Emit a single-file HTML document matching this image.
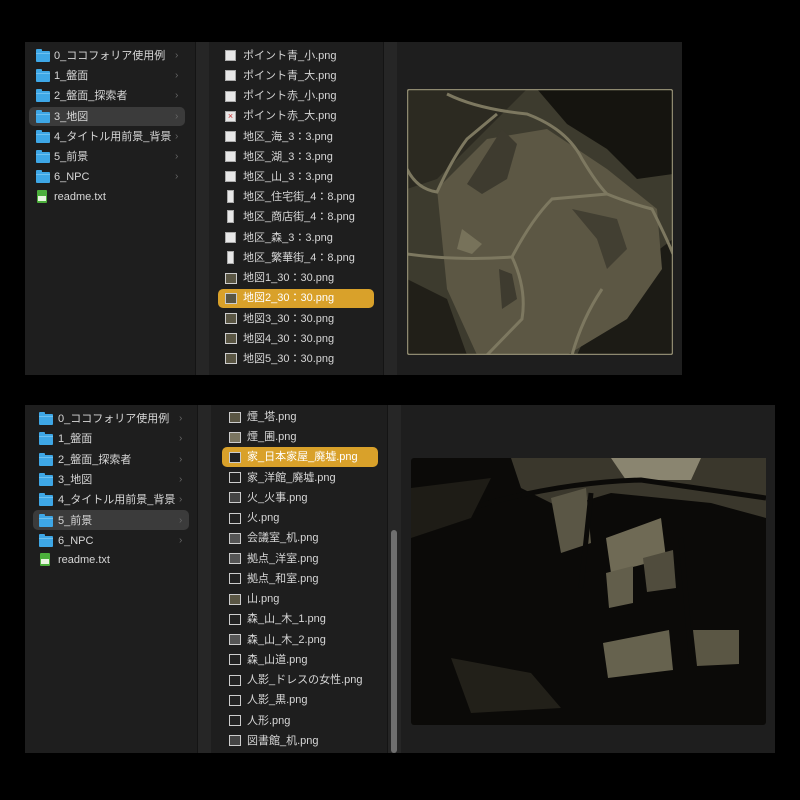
<!DOCTYPE html>
<html><head><meta charset="utf-8"><style>
*{margin:0;padding:0;box-sizing:border-box}
body{width:800px;height:800px;background:#000;position:relative;overflow:hidden;font-family:"Liberation Sans","Noto Sans CJK JP",sans-serif;font-size:11px;color:#d6d6d6}
.p{position:absolute;background:#1e1e1e}
.div{position:absolute;background:#262626;border-left:1px solid #141414}
.r{position:absolute;height:20px;line-height:20px;white-space:nowrap}
.sel1{position:absolute;background:#3b3b3b;border-radius:5px}
.sel2{position:absolute;background:#d9a12a;border-radius:5px}
.fd{position:absolute;width:14px;height:11px;background:#3ea7e6;border-radius:1px}
.fd:before{content:"";position:absolute;left:0;top:-2px;width:6px;height:3px;background:#3ea7e6;border-radius:1px 1px 0 0}
.fd:after{content:"";position:absolute;left:0;top:2px;width:14px;height:1px;background:#6cc0f0}
.ch{position:absolute;color:#666;font-size:10px}
.ic{position:absolute;width:11px;height:11px;background:#e8e8e8;border:1px solid #aaa}
.tall{width:7px;height:13px}
.th{position:absolute;width:12px;height:11px;background:#5a5644;border:1px solid #ccc}
.thd{background:#222;border:1px solid #ccc}
</style></head><body>

<!-- TOP PANEL -->
<div class="p" style="left:25px;top:42px;width:657px;height:333px"></div>
<div class="div" style="left:195px;top:42px;width:14px;height:333px"></div>
<div class="div" style="left:383px;top:42px;width:14px;height:333px"></div>
<div class="sel1" style="left:29px;top:107px;width:156px;height:19px"></div>

<div class="fd" style="left:36px;top:51px"></div><div class="r" style="left:54px;top:46px">0_ココフォリア使用例</div><div class="ch" style="left:175px;top:50px">›</div>
<div class="fd" style="left:36px;top:71px"></div><div class="r" style="left:54px;top:66px">1_盤面</div><div class="ch" style="left:175px;top:70px">›</div>
<div class="fd" style="left:36px;top:91px"></div><div class="r" style="left:54px;top:86px">2_盤面_探索者</div><div class="ch" style="left:175px;top:90px">›</div>
<div class="fd" style="left:36px;top:112px"></div><div class="r" style="left:54px;top:107px">3_地図</div><div class="ch" style="left:175px;top:111px">›</div>
<div class="fd" style="left:36px;top:132px"></div><div class="r" style="left:54px;top:127px">4_タイトル用前景_背景</div><div class="ch" style="left:175px;top:131px">›</div>
<div class="fd" style="left:36px;top:152px"></div><div class="r" style="left:54px;top:147px">5_前景</div><div class="ch" style="left:175px;top:151px">›</div>
<div class="fd" style="left:36px;top:172px"></div><div class="r" style="left:54px;top:167px">6_NPC</div><div class="ch" style="left:175px;top:171px">›</div>
<div style="position:absolute;left:37px;top:190px;width:10px;height:13px;background:#4caf3c;border-radius:1px"></div><div style="position:absolute;left:38px;top:196px;width:8px;height:5px;background:#e8f5e0"></div><div class="r" style="left:54px;top:187px">readme.txt</div>

<div class="sel2" style="left:218px;top:289px;width:156px;height:19px"></div>
<div class="ic" style="left:225px;top:50px"></div><div class="r" style="left:243px;top:46px">ポイント青_小.png</div>
<div class="ic" style="left:225px;top:70px"></div><div class="r" style="left:243px;top:66px">ポイント青_大.png</div>
<div class="ic" style="left:225px;top:91px"></div><div class="r" style="left:243px;top:86px">ポイント赤_小.png</div>
<div class="ic" style="left:225px;top:111px;color:#c33;font-size:9px;line-height:9px;text-align:center">×</div><div class="r" style="left:243px;top:106px">ポイント赤_大.png</div>
<div class="ic" style="left:225px;top:131px"></div><div class="r" style="left:243px;top:127px">地区_海_3：3.png</div>
<div class="ic" style="left:225px;top:151px"></div><div class="r" style="left:243px;top:147px">地区_湖_3：3.png</div>
<div class="ic" style="left:225px;top:171px"></div><div class="r" style="left:243px;top:167px">地区_山_3：3.png</div>
<div class="ic tall" style="left:227px;top:190px"></div><div class="r" style="left:243px;top:187px">地区_住宅街_4：8.png</div>
<div class="ic tall" style="left:227px;top:210px"></div><div class="r" style="left:243px;top:207px">地区_商店街_4：8.png</div>
<div class="ic" style="left:225px;top:232px"></div><div class="r" style="left:243px;top:228px">地区_森_3：3.png</div>
<div class="ic tall" style="left:227px;top:251px"></div><div class="r" style="left:243px;top:248px">地区_繁華街_4：8.png</div>
<div class="th" style="left:225px;top:273px"></div><div class="r" style="left:243px;top:268px">地図1_30：30.png</div>
<div class="th" style="left:225px;top:293px"></div><div class="r" style="left:243px;top:288px;color:#fff">地図2_30：30.png</div>
<div class="th" style="left:225px;top:313px"></div><div class="r" style="left:243px;top:309px">地図3_30：30.png</div>
<div class="th" style="left:225px;top:333px"></div><div class="r" style="left:243px;top:329px">地図4_30：30.png</div>
<div class="th" style="left:225px;top:353px"></div><div class="r" style="left:243px;top:349px">地図5_30：30.png</div>

<svg style="position:absolute;left:407px;top:89px" width="266" height="266" viewBox="0 0 266 266">
<rect width="266" height="266" fill="#3d3b2e"/>
<path d="M0 0H120L80 40L30 90L0 100Z" fill="#2c2a21"/>
<path d="M130 0H266V85L230 90L200 60L160 35Z" fill="#15140f"/>
<path d="M0 190L40 210L60 266H0Z" fill="#211f18"/>
<path d="M200 200L266 150V266H170Z" fill="#1c1b15"/>
<path d="M30 100L80 50L140 40L200 80L250 120L255 180L220 230L160 266H70L40 200Z" fill="#5c5744"/>
<path d="M95 40L110 55L100 90L75 105L60 95Z" fill="#3e3b2f"/>
<path d="M165 120L210 130L220 160L200 180L190 150Z" fill="#423f32"/>
<path d="M92 180L105 185L110 210L95 220Z" fill="#3e3b2f"/>
<path d="M55 140L75 155L65 165L50 160Z" fill="#77725a"/>
<g fill="none" stroke="#7d7860" stroke-width="3">
<path d="M40 5Q70 20 120 25Q160 40 175 70Q190 95 200 105Q225 115 245 120Q260 150 266 165"/>
<path d="M0 80Q10 100 30 103Q45 70 60 50L90 25"/>
<path d="M0 165Q50 172 105 168Q125 130 145 110L200 105"/>
<path d="M105 168Q120 200 115 230L80 266"/>
<path d="M195 200Q175 230 165 266"/>
</g>
<rect x="0.5" y="0.5" width="265" height="265" fill="none" stroke="#8e8970" stroke-width="1.5" rx="2"/>
</svg>

<!-- BOTTOM PANEL -->
<div class="p" style="left:25px;top:405px;width:750px;height:348px"></div>
<div class="div" style="left:197px;top:405px;width:14px;height:348px"></div>
<div class="div" style="left:387px;top:405px;width:14px;height:348px"></div>
<div style="position:absolute;left:391px;top:530px;width:6px;height:223px;background:#6f6f6f;border-radius:3px"></div>
<div class="sel1" style="left:33px;top:510px;width:156px;height:20px"></div>

<div class="fd" style="left:39px;top:414px"></div><div class="r" style="left:58px;top:409px">0_ココフォリア使用例</div><div class="ch" style="left:179px;top:413px">›</div>
<div class="fd" style="left:39px;top:434px"></div><div class="r" style="left:58px;top:429px">1_盤面</div><div class="ch" style="left:179px;top:433px">›</div>
<div class="fd" style="left:39px;top:455px"></div><div class="r" style="left:58px;top:450px">2_盤面_探索者</div><div class="ch" style="left:179px;top:454px">›</div>
<div class="fd" style="left:39px;top:475px"></div><div class="r" style="left:58px;top:470px">3_地図</div><div class="ch" style="left:179px;top:474px">›</div>
<div class="fd" style="left:39px;top:495px"></div><div class="r" style="left:58px;top:490px">4_タイトル用前景_背景</div><div class="ch" style="left:179px;top:494px">›</div>
<div class="fd" style="left:39px;top:516px"></div><div class="r" style="left:58px;top:511px">5_前景</div><div class="ch" style="left:179px;top:515px">›</div>
<div class="fd" style="left:39px;top:536px"></div><div class="r" style="left:58px;top:531px">6_NPC</div><div class="ch" style="left:179px;top:535px">›</div>
<div style="position:absolute;left:40px;top:553px;width:10px;height:13px;background:#4caf3c;border-radius:1px"></div><div style="position:absolute;left:41px;top:559px;width:8px;height:5px;background:#e8f5e0"></div><div class="r" style="left:58px;top:550px">readme.txt</div>

<div class="sel2" style="left:222px;top:447px;width:156px;height:20px"></div>
<div class="th" style="left:229px;top:412px"></div><div class="r" style="left:247px;top:407px">煙_塔.png</div>
<div class="th" style="left:229px;top:432px;background:#7a7560"></div><div class="r" style="left:247px;top:427px">煙_圃.png</div>
<div class="th thd" style="left:229px;top:452px"></div><div class="r" style="left:247px;top:447px;color:#fff">家_日本家屋_廃墟.png</div>
<div class="th thd" style="left:229px;top:472px"></div><div class="r" style="left:247px;top:468px">家_洋館_廃墟.png</div>
<div class="th" style="left:229px;top:492px;background:#444"></div><div class="r" style="left:247px;top:488px">火_火事.png</div>
<div class="th thd" style="left:229px;top:513px"></div><div class="r" style="left:247px;top:508px">火.png</div>
<div class="th" style="left:229px;top:533px;background:#555"></div><div class="r" style="left:247px;top:528px">会議室_机.png</div>
<div class="th" style="left:229px;top:553px;background:#555"></div><div class="r" style="left:247px;top:549px">拠点_洋室.png</div>
<div class="th thd" style="left:229px;top:573px"></div><div class="r" style="left:247px;top:569px">拠点_和室.png</div>
<div class="th" style="left:229px;top:594px"></div><div class="r" style="left:247px;top:589px">山.png</div>
<div class="th thd" style="left:229px;top:614px"></div><div class="r" style="left:247px;top:609px">森_山_木_1.png</div>
<div class="th" style="left:229px;top:634px;background:#555"></div><div class="r" style="left:247px;top:630px">森_山_木_2.png</div>
<div class="th thd" style="left:229px;top:654px"></div><div class="r" style="left:247px;top:650px">森_山道.png</div>
<div class="th thd" style="left:229px;top:675px"></div><div class="r" style="left:247px;top:670px">人影_ドレスの女性.png</div>
<div class="th thd" style="left:229px;top:695px"></div><div class="r" style="left:247px;top:690px">人影_黒.png</div>
<div class="th thd" style="left:229px;top:715px"></div><div class="r" style="left:247px;top:711px">人形.png</div>
<div class="th" style="left:229px;top:735px;background:#444"></div><div class="r" style="left:247px;top:731px">図書館_机.png</div>

<svg style="position:absolute;left:411px;top:458px" width="355" height="267" viewBox="0 0 355 267">
<rect width="355" height="267" rx="3" fill="#0b0a08"/>
<path d="M100 0H355V60L300 45L200 35L150 50L110 30Z" fill="#3a372c"/>
<path d="M200 0H290L280 22L215 22Z" fill="#8a8570"/>
<path d="M140 40L175 30L180 85L150 95Z" fill="#5a5645"/>
<path d="M195 80L250 60L255 100L200 115Z" fill="#6f6a55"/>
<path d="M195 115L222 108L222 145L198 150Z" fill="#625e4b"/>
<path d="M232 100L262 92L265 130L236 134Z" fill="#504c3d"/>
<path d="M192 185L258 172L262 212L197 220Z" fill="#66624e"/>
<path d="M282 172L328 172L328 206L286 208Z" fill="#5a5644"/>
<g stroke="#0b0a08" stroke-width="5" fill="none">
<path d="M0 70Q120 25 230 22L355 40"/>
<path d="M180 35L170 130"/>
<path d="M270 80L280 200"/>
</g>
<path d="M40 200L120 215L150 250L60 255Z" fill="#2c2a21" opacity=".7"/>
<path d="M0 30L80 20L60 60L0 80Z" fill="#1e1c16"/>
</svg>
</body></html>
